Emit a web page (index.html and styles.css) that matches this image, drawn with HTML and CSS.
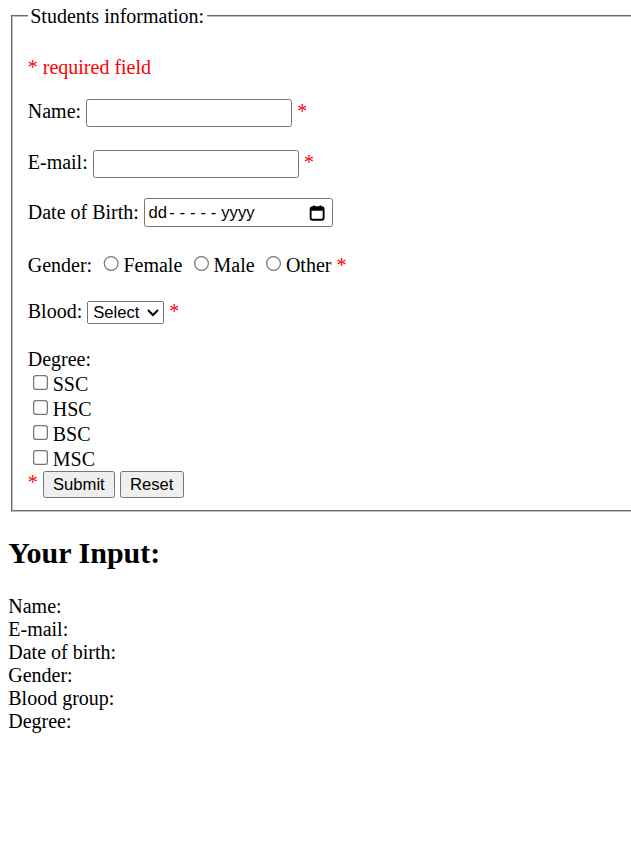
FILE: index.html
```html
<!DOCTYPE html>
<html class="root">
<head>
<meta charset="utf-8">
<title>Students information</title>
<link rel="stylesheet" href="styles.css">
</head>
<body class="page">
<fieldset class="box">
<legend class="legend">Students information:</legend>
<p class="note"><span class="error">* required field</span></p>
<form class="form">
Name: <input class="text" type="text" name="name"> <span class="error">*</span>
<br><br>
E-mail: <input class="text" type="text" name="email"> <span class="error">*</span>
<br><br>
Date of Birth: <span class="date"><span class="date-text">dd<span class="dashes">-----</span>yyyy</span><svg class="cal" width="13" height="13" viewBox="0 0 13 13" aria-hidden="true"><rect x="1.3" y="1.8" width="10.4" height="10" rx="1.6" fill="none" stroke="#000" stroke-width="1.5"/><rect x="1.3" y="1.8" width="10.4" height="2.8" fill="#000"/><rect x="3.2" y="0.4" width="1.4" height="2" fill="#000"/><rect x="8.4" y="0.4" width="1.4" height="2" fill="#000"/></svg></span>
<br><br>
Gender: <input class="radio" type="radio" name="gender" value="female">Female <input class="radio" type="radio" name="gender" value="male">Male <input class="radio" type="radio" name="gender" value="other">Other <span class="error">*</span>
<br><br>
Blood: <select class="select" name="blood"><option>Select</option><option>A+</option><option>A-</option><option>B+</option><option>B-</option><option>O+</option><option>O-</option><option>AB+</option><option>AB-</option></select> <span class="error">*</span>
<br><br>
Degree:<br>
<input class="check" type="checkbox" name="ssc">SSC<br>
<input class="check" type="checkbox" name="hsc">HSC<br>
<input class="check" type="checkbox" name="bsc">BSC<br>
<input class="check" type="checkbox" name="msc">MSC<br>
<span class="error">*</span> <input class="btn" type="submit" value="Submit"> <input class="btn" type="reset" value="Reset">
</form>
</fieldset>
<h2 class="title">Your Input:</h2>
Name: <br>
E-mail: <br>
Date of birth: <br>
Gender: <br>
Blood group: <br>
Degree: <br>
</body>
</html>
```

FILE: styles.css
```css
.root {
  overflow: hidden;
}

.page {
  zoom: 1.25;
  margin: 3.6px 0 8px 6.6px;
  font-family: "Liberation Serif", "Times New Roman", serif;
  font-size: 16px;
  color: #000;
  background: #fff;
}

.box {
  margin: 0 0 0 2px;
  padding: 0.35em 0.75em 0.625em;
  border: 2px groove #c0c0c0;
  border-right: none;
}

.legend {
  padding: 0 2px;
}

.note {
  margin: 16.8px 0 16px;
}

.error {
  color: #ff0000;
}

.text {
  box-sizing: border-box;
  width: 165px;
  height: 22.4px;
  font-family: "Liberation Sans", Arial, sans-serif;
  font-size: 13.33px;
  border: 1px solid #767676;
  border-radius: 2px;
  padding: 1px 2px;
}

.date {
  display: inline-flex;
  align-items: center;
  justify-content: space-between;
  box-sizing: border-box;
  width: 151.2px;
  height: 23.2px;
  padding: 0 5px 0 3px;
  border: 1px solid #767676;
  border-radius: 2px;
  vertical-align: middle;
  margin-top: -1.8px;
}

.date-text {
  font-family: "Liberation Sans", Arial, sans-serif;
  font-size: 13.33px;
}

.dashes {
  letter-spacing: 3.9px;
  margin-left: 1.6px;
}

.cal {
  display: block;
}

.radio {
  margin-top: 4.6px;
}

.select {
  width: 61.6px;
  margin-bottom: 0.8px;
}

.btn {
  font-family: "Liberation Sans", Arial, sans-serif;
  font-size: 13.33px;
  padding: 1px 6.5px;
}

.title {
  font-size: 1.5em;
  margin: 19.1px 0 19.9px;
}
```
